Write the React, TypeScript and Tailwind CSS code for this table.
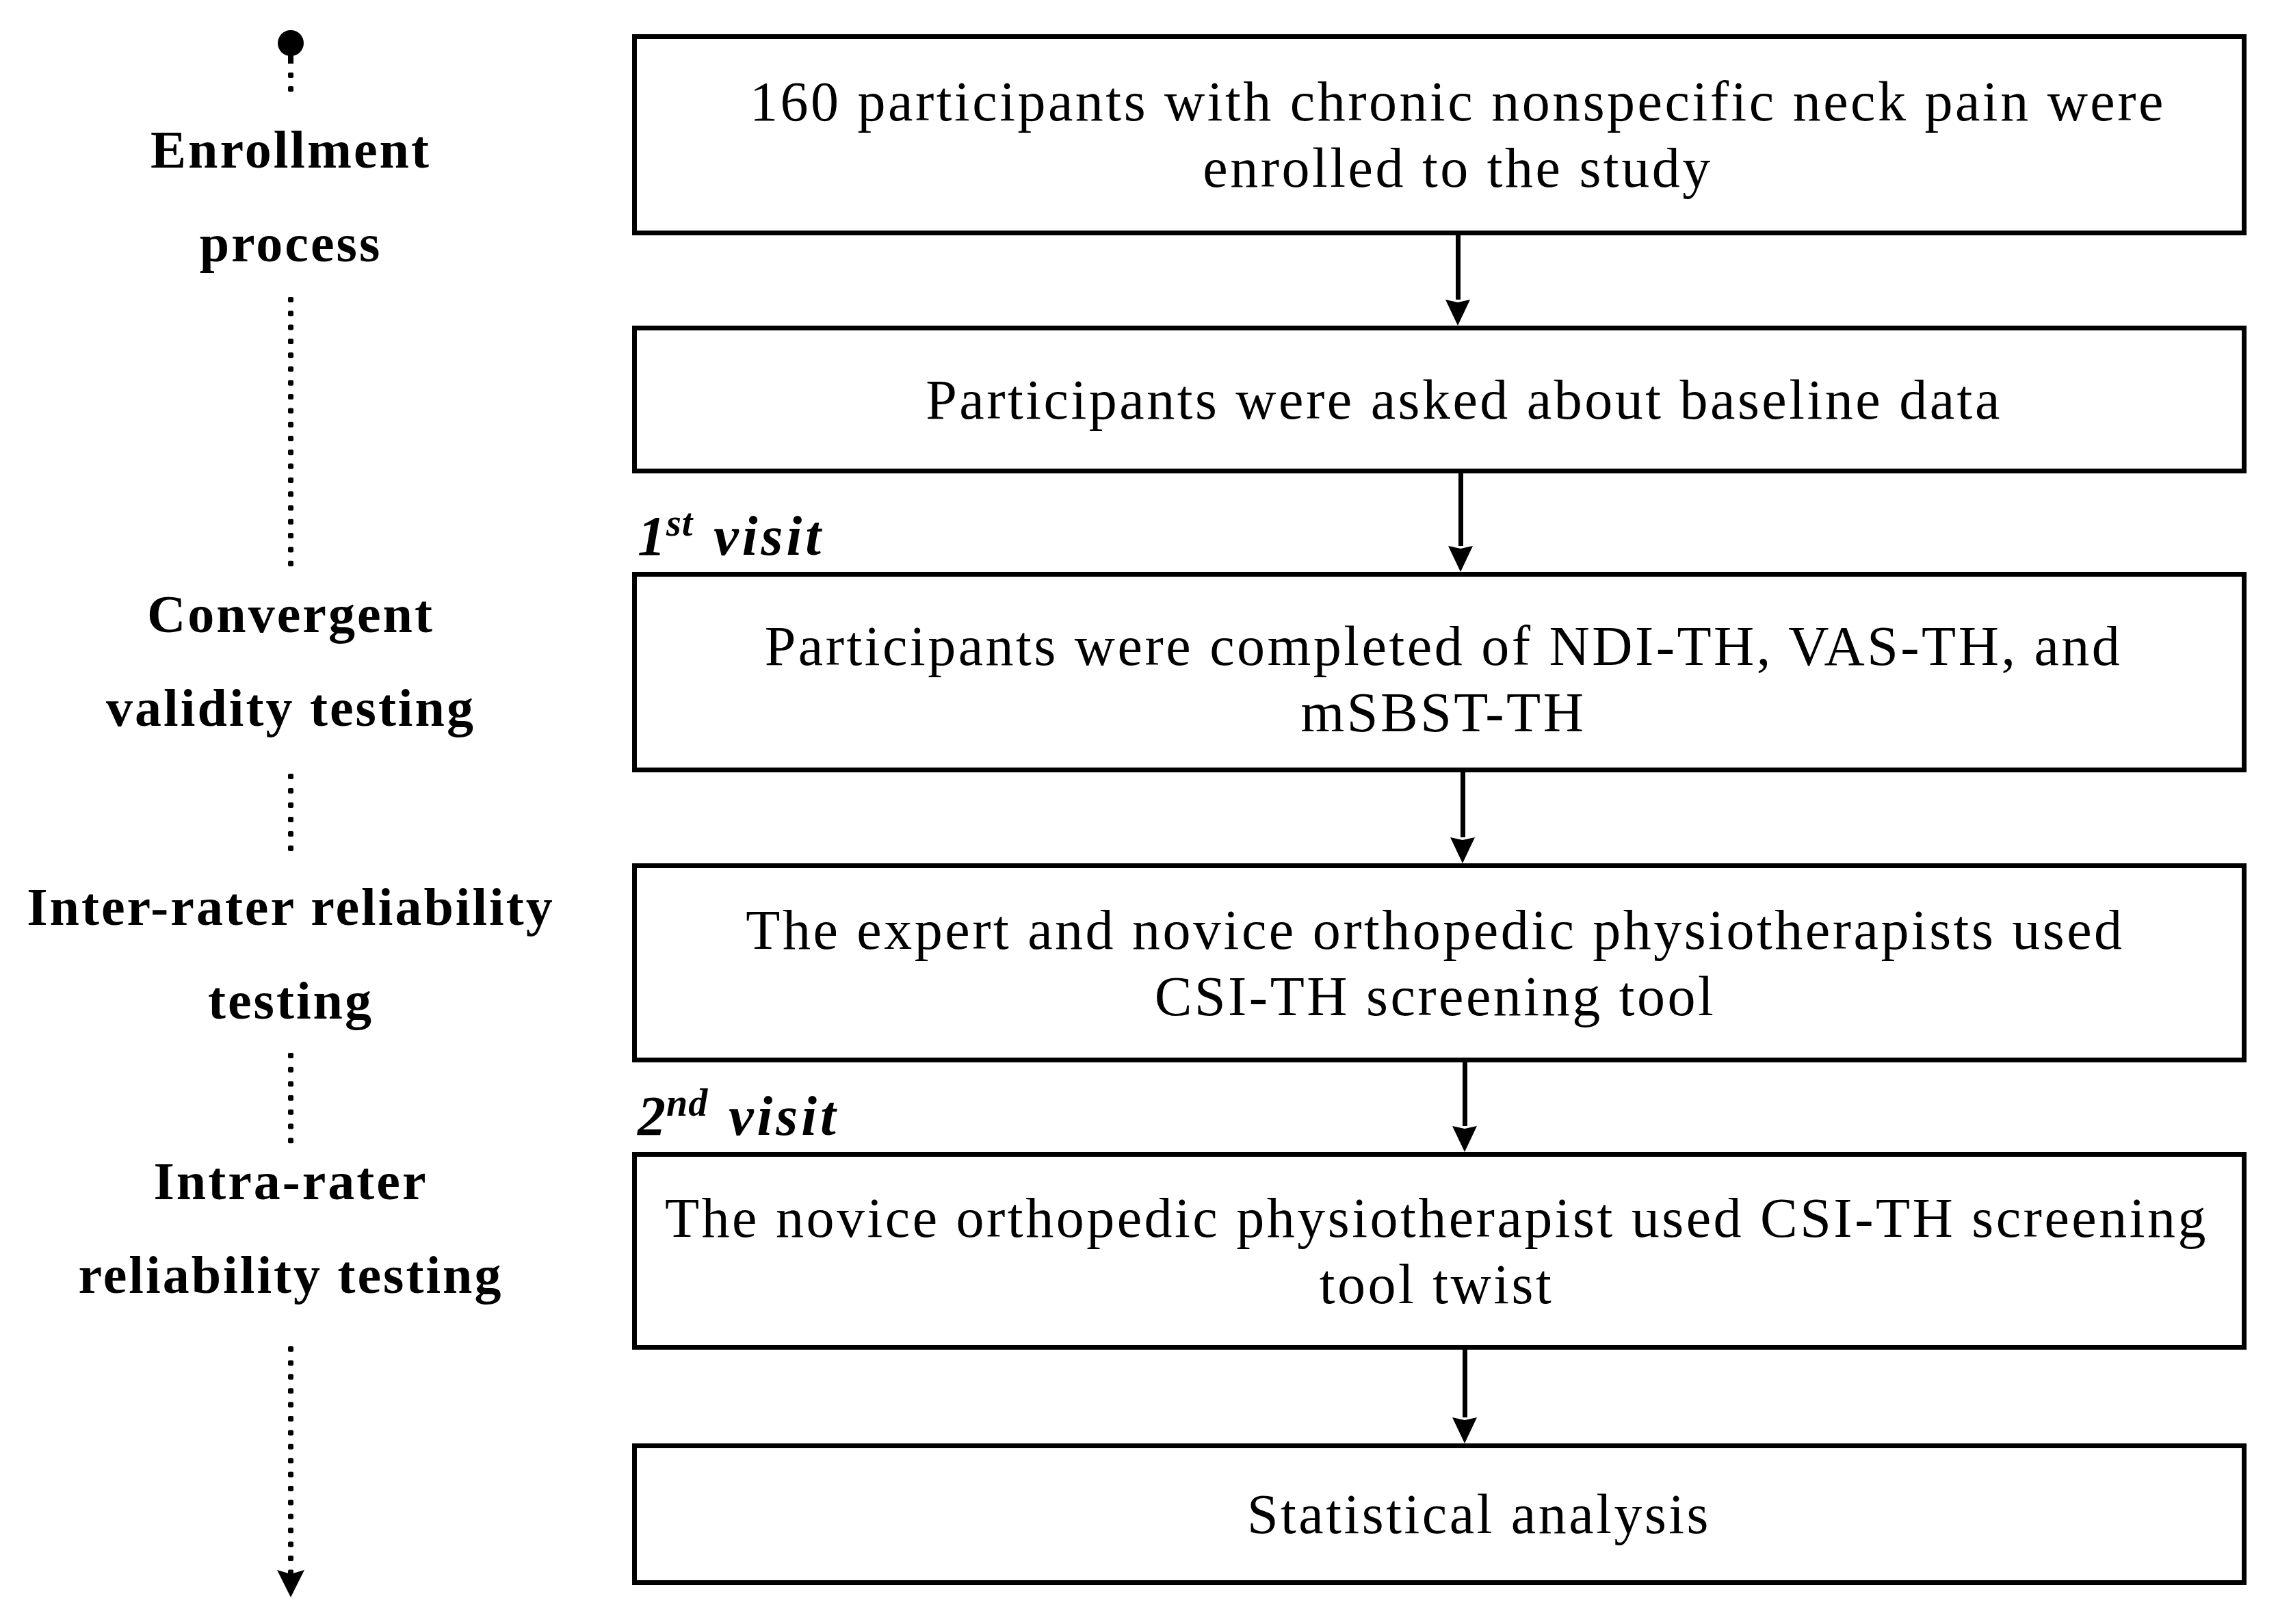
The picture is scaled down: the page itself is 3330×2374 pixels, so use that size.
import React from "react";

function Dots({ h, first, count, gap }: { h: number; first: number; count: number; gap: number }) {
  const ys = Array.from({ length: count }, (_, i) => first + i * gap);
  return (
    <svg width="40" height={h} className="overflow-visible shrink-0">
      {ys.map((y) => (
        <rect key={y} x="16" y={y - 4} width="8" height="8" rx="2" fill="black" />
      ))}
    </svg>
  );
}

function Label({ lines }: { lines: string[] }) {
  return (
    <div className="text-center font-bold text-[78px] leading-[137px] tracking-[3px] whitespace-nowrap">
      {lines.map((l) => (
        <div key={l}>{l}</div>
      ))}
    </div>
  );
}

function Arrow() {
  return (
    <div className="flex flex-col items-center w-[36px] self-stretch">
      <div className="w-[7px] flex-1 bg-black" />
      <svg width="36" height="38" viewBox="0 0 36 38" className="shrink-0">
        <path d="M0 0 L18 4 L36 0 L18 38 Z" fill="black" />
      </svg>
    </div>
  );
}

function Box({ h, className, children }: { h: string; className: string; children: React.ReactNode }) {
  return (
    <div className={`${h} border-[7px] border-black flex items-center justify-center text-center whitespace-nowrap`}>
      <div className={className}>{children}</div>
    </div>
  );
}

function Visit({ n, suffix }: { n: string; suffix: string }) {
  return (
    <div className="font-bold italic text-[82px] leading-[82px] pb-[11px] self-end w-[1185px] tracking-[1px]">
      {n}
      <sup className="text-[56px] mr-[30px]">{suffix}</sup>
      <span className="tracking-[5px]">visit</span>
    </div>
  );
}

export default function App() {
  return (
    <div className="w-[3330px] h-[2374px] bg-white text-black flex font-['Liberation_Serif',serif] overflow-hidden">
      {/* timeline */}
      <div className="w-[850px] flex flex-col items-center pt-[43px]">
        <svg width="40" height="50" viewBox="0 0 40 50" className="shrink-0">
          <circle cx="20" cy="20" r="19" fill="black" />
          <rect x="16" y="30" width="8" height="20" fill="black" />
        </svg>
        <Dots h={57} first={17} count={2} gap={20} />
        <Label lines={["Enrollment", "process"]} />
        <Dots h={405} first={14} count={20} gap={20.3} />
        <Label lines={["Convergent", "validity testing"]} />
        <Dots h={154} first={32} count={6} gap={21} />
        <Label lines={["Inter-rater reliability", "testing"]} />
        <Dots h={127} first={12} count={7} gap={20.7} />
        <Label lines={["Intra-rater", "reliability testing"]} />
        <Dots h={363} first={40} count={17} gap={20.4} />
        <svg width="40" height="40" viewBox="0 0 40 40" className="shrink-0">
          <path d="M0 0 L20 6 L40 0 L20 40 Z" fill="black" />
        </svg>
      </div>

      {/* flow */}
      <div className="w-[2360px] ml-[74px] pt-[50px] flex flex-col text-[82px] leading-[97px] tracking-[3.5px]">
        <Box h="h-[294px]" className="pl-[54px]">
          160 participants with chronic nonspecific neck pain were
          <br />
          enrolled to the study
        </Box>
        <div className="h-[132px] flex pl-[1189px]">
          <Arrow />
        </div>
        <Box h="h-[216px]" className="pl-[72px]">
          Participants were asked about baseline data
        </Box>
        <div className="h-[144px] flex pl-[8px]">
          <Visit n="1" suffix="st" />
          <Arrow />
        </div>
        <Box h="h-[293px]" className="pl-[12px] pt-[20px]">
          Participants were completed of NDI-TH, VAS-TH, and
          <br />
          mSBST-TH
        </Box>
        <div className="h-[133px] flex pl-[1196px]">
          <Arrow />
        </div>
        <Box h="h-[291px]" className="pr-[12px]">
          The expert and novice orthopedic physiotherapists used
          <br />
          CSI-TH screening tool
        </Box>
        <div className="h-[131px] flex pl-[8px]">
          <Visit n="2" suffix="nd" />
          <div className="ml-[6px] flex self-stretch">
            <Arrow />
          </div>
        </div>
        <Box h="h-[289px]" className="pr-[8px]">
          The novice orthopedic physiotherapist used CSI-TH screening
          <br />
          tool twist
        </Box>
        <div className="h-[137px] flex pl-[1199px]">
          <Arrow />
        </div>
        <Box h="h-[207px]" className="pl-[116px]">
          Statistical analysis
        </Box>
      </div>
    </div>
  );
}
